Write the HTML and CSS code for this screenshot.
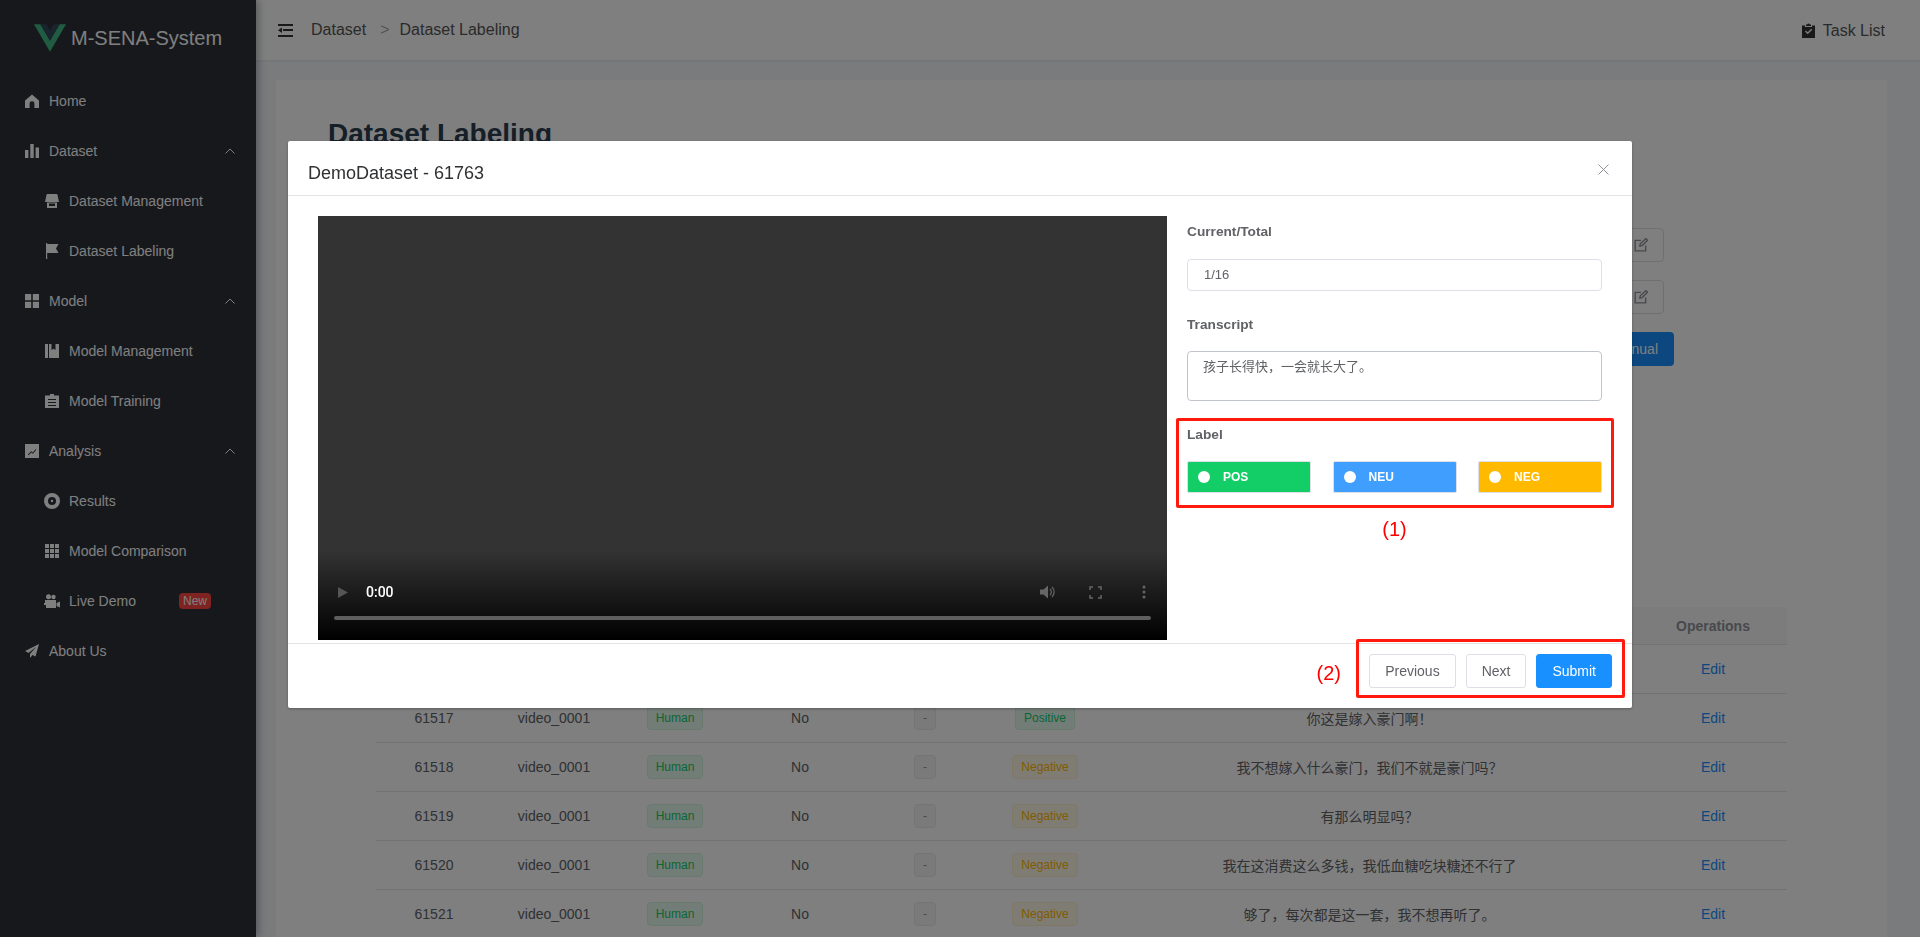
FILE: index.html
```html
<!DOCTYPE html>
<html>
<head>
<meta charset="utf-8">
<title>M-SENA-System</title>
<link rel="stylesheet" href="styles.css">
</head>
<body>
<div class="app">
    <aside class="sidebar">
        <div class="logo">
            <svg class="logo-mark" viewBox="0 0 256 221"><path fill="#41b883" d="M0 0l128 220.8L256 0h-51.2L128 132.48 50.56 0H0z"/><path fill="#35495e" d="M50.56 0L128 133.12 204.8 0h-47.36L128 51.2 97.92 0H50.56z"/></svg>
            <span>M-SENA-System</span>
        </div>
        <nav>
            <a class="item"><svg class="icon" viewBox="0 0 14 14"><path d="M7 0.5L0 6.6V14h4.600V9.600a2.400 2.400 0 0 1 4.800 0V14H14V6.600z"/></svg>Home</a>
            <a class="item"><svg class="icon" viewBox="0 0 14 14"><path d="M0 6h3.400v8H0zM5.300 0h3.400v14H5.300zM10.600 3.500H14V14h-3.400z"/></svg>Dataset<svg class="chevron" viewBox="0 0 10 6"><path d="M0.500 5.500L5 1l4.500 4.500"/></svg></a>
            <a class="item sub"><svg class="icon" viewBox="0 0 14 14"><path d="M2.500 0h9a1 1 0 0 1 1 .8L14 8H0L1.500 .8a1 1 0 0 1 1-.8zM2 8.500h10V14H2zm2 1V12h6V9.500z" fill-rule="evenodd"/></svg>Dataset Management</a>
            <a class="item sub"><svg class="icon flag" viewBox="0 0 14 16"><path d="M1 0h1.200v16H1zM2.200 1H13.500L11 5.500 13.500 10H2.200z"/></svg>Dataset Labeling</a>
            <a class="item"><svg class="icon" viewBox="0 0 14 14"><path d="M0 0h6.200v6.200H0zM7.800 0H14v6.200H7.800zM0 7.800h6.200V14H0zM7.800 7.800H14V14H7.800z"/></svg>Model<svg class="chevron" viewBox="0 0 10 6"><path d="M0.500 5.500L5 1l4.500 4.500"/></svg></a>
            <a class="item sub"><svg class="icon" viewBox="0 0 14 14"><path d="M0 0h3v14H0zM4 0h2.500v6L8.500 4.800 10.500 6V0H14v14H4z"/></svg>Model Management</a>
            <a class="item sub"><svg class="icon" viewBox="0 0 14 14"><path d="M5 0h4v1.500h5V14H0V1.500h5zM3 5v1h8V5zm0 3v1h8V8zm0 3v1h8v-1z" fill-rule="evenodd"/></svg>Model Training</a>
            <a class="item"><svg class="icon" viewBox="0 0 14 14"><path d="M0 0h14v14H0zM3 10.500l.7.7 2.600-2.700 1.600 1.300 3.400-4-.7-.6-2.800 3.300-1.600-1.300z" fill-rule="evenodd"/></svg>Analysis<svg class="chevron" viewBox="0 0 10 6"><path d="M0.500 5.500L5 1l4.500 4.500"/></svg></a>
            <a class="item sub"><svg class="icon wide" viewBox="0 0 16 16"><path d="M8 0a8 8 0 1 1 0 16A8 8 0 0 1 8 0zm0 4a4 4 0 1 0 0 8 4 4 0 0 0 0-8zm0 2.800a1.200 1.200 0 1 1 0 2.400 1.200 1.200 0 0 1 0-2.400z" fill-rule="evenodd"/></svg>Results</a>
            <a class="item sub"><svg class="icon" viewBox="0 0 14 14"><path d="M0 0h4v4H0zM5 0h4v4H5zM10 0h4v4h-4zM0 5h4v4H0zM5 5h4v4H5zM10 5h4v4h-4zM0 10h4v4H0zM5 10h4v4H5zM10 10h4v4h-4z"/></svg>Model Comparison</a>
            <a class="item sub"><svg class="icon wide" viewBox="0 0 16 14"><circle cx="4.500" cy="2.700" r="2.500"/><circle cx="9.500" cy="3" r="2.200"/><path d="M1 6h11v8H2v-3H0V9h1zM12.500 9L16 7.500v6L12.500 12z"/></svg>Live Demo<span class="badge">New</span></a>
            <a class="item"><svg class="icon" viewBox="0 0 14 14"><path d="M14 0L0 7l3.500 2L11 3 5 10v4l2.500-3 3 1.500z"/></svg>About Us</a>
        </nav>
    </aside>

    <div class="main">
        <header class="topbar">
            <svg class="fold" viewBox="0 0 15 13"><path d="M0 0h15v2H0zM5 5h10v2H5zM0 11h15v2H0zM4 3.500v5.500L0 6.200z"/></svg>
            <span class="crumb">Dataset</span>
            <span class="crumb-sep">&gt;</span>
            <span class="crumb">Dataset Labeling</span>
            <span class="tasks">
                <svg class="task-icon" viewBox="0 0 13 15"><path d="M4 1.500h1.200a1.400 1.400 0 0 1 2.600 0H9V3H4zM0 2.500h3V4h7V2.500h3V15H0zM3 8.500l2.700 2.700L10.200 6.700 9.200 5.700 5.700 9.200 4 7.500z" fill-rule="evenodd"/></svg>
                Task List
            </span>
        </header>

        <section class="content">
            <div class="card">
                <h1>Dataset Labeling</h1>
                <div class="tools">
                    <div class="tool-row"><span class="append"><svg viewBox="0 0 12 12"><path d="M10 6.500V11H1V2h5M5 7l.4-2L10.200.5l1.400 1.400L7 6.500z"/></svg></span></div>
                    <div class="tool-row"><span class="append"><svg viewBox="0 0 12 12"><path d="M10 6.500V11H1V2h5M5 7l.4-2L10.200.5l1.400 1.400L7 6.500z"/></svg></span></div>
                    <div class="tool-row last"><button class="manual">Manual</button></div>
                </div>
                <div class="table-wrap">
                    <table>
                        <colgroup>
                            <col class="c1"><col class="c2"><col class="c3"><col class="c4"><col class="c5"><col class="c6"><col class="c7"><col class="c8">
                        </colgroup>
                        <thead>
                            <tr><th></th><th></th><th></th><th></th><th></th><th></th><th></th><th class="ops">Operations</th></tr>
                        </thead>
                        <tbody>
                            <tr><td></td><td></td><td></td><td></td><td></td><td></td><td></td><td class="ops"><a>Edit</a></td></tr>
                            <tr><td>61517</td><td>video_0001</td><td><span class="tag good">Human</span></td><td>No</td><td><span class="tag info">-</span></td><td><span class="tag good">Positive</span></td><td>你这是嫁入豪门啊！</td><td class="ops"><a>Edit</a></td></tr>
                            <tr><td>61518</td><td>video_0001</td><td><span class="tag good">Human</span></td><td>No</td><td><span class="tag info">-</span></td><td><span class="tag warn">Negative</span></td><td>我不想嫁入什么豪门，我们不就是豪门吗？</td><td class="ops"><a>Edit</a></td></tr>
                            <tr><td>61519</td><td>video_0001</td><td><span class="tag good">Human</span></td><td>No</td><td><span class="tag info">-</span></td><td><span class="tag warn">Negative</span></td><td>有那么明显吗？</td><td class="ops"><a>Edit</a></td></tr>
                            <tr><td>61520</td><td>video_0001</td><td><span class="tag good">Human</span></td><td>No</td><td><span class="tag info">-</span></td><td><span class="tag warn">Negative</span></td><td>我在这消费这么多钱，我低血糖吃块糖还不行了</td><td class="ops"><a>Edit</a></td></tr>
                            <tr><td>61521</td><td>video_0001</td><td><span class="tag good">Human</span></td><td>No</td><td><span class="tag info">-</span></td><td><span class="tag warn">Negative</span></td><td>够了，每次都是这一套，我不想再听了。</td><td class="ops"><a>Edit</a></td></tr>
                        </tbody>
                    </table>
                </div>
            </div>
        </section>
    </div>
</div>

<div class="overlay"></div>

<div class="dialog">
    <div class="dialog-head">
        <span>DemoDataset - 61763</span>
        <svg class="close" viewBox="0 0 11 11"><path d="M0.500 0.500l10 10M10.500 0.500l-10 10"/></svg>
    </div>
    <div class="dialog-body">
        <div class="video">
            <div class="controls">
                <div class="control-row">
                    <svg class="play" viewBox="0 0 10 11"><path d="M0 0l10 5.500L0 11z"/></svg>
                    <span class="time">0:00</span>
                    <svg class="volume" viewBox="0 0 16 14"><path d="M0 4.500h3.500L8 0.500v13l-4.500-4H0z"/><path class="wave" d="M10 4a4 4 0 0 1 0 6M12 2a7 7 0 0 1 0 10"/></svg>
                    <svg class="full" viewBox="0 0 13 13"><path d="M1 4V1h3M9 1h3v3M12 9v3H9M4 12H1V9"/></svg>
                    <svg class="more" viewBox="0 0 4 14"><circle cx="2" cy="2" r="1.500"/><circle cx="2" cy="7" r="1.500"/><circle cx="2" cy="12" r="1.500"/></svg>
                </div>
                <div class="timeline"></div>
            </div>
        </div>
        <div class="form">
            <div class="field-label">Current/Total</div>
            <div class="input">1/16</div>
            <div class="field-label second">Transcript</div>
            <div class="textarea">孩子长得快，一会就长大了。</div>
            <div class="mark-box label-box">
                <div class="label-title">Label</div>
                <div class="choices">
                    <span class="choice pos"><i></i>POS</span>
                    <span class="choice neu"><i></i>NEU</span>
                    <span class="choice neg"><i></i>NEG</span>
                </div>
            </div>
            <div class="mark-note">(1)</div>
        </div>
    </div>
    <div class="dialog-foot">
        <span class="mark-note foot-note">(2)</span>
        <div class="mark-box foot-box">
            <button class="btn">Previous</button>
            <button class="btn">Next</button>
            <button class="btn primary">Submit</button>
        </div>
    </div>
</div>
</body>
</html>
```

FILE: styles.css
```css
* {
    box-sizing: border-box;
}

html, body {
    margin: 0;
    height: 100%;
    overflow: hidden;
}

body {
    font-family: "Liberation Sans", "Noto Sans CJK SC", sans-serif;
    font-size: 14px;
    color: #606266;
}

.app {
    display: flex;
    height: 937px;
}

/* sidebar */
.sidebar {
    width: 256px;
    flex-shrink: 0;
    background: #2e3039;
    color: #fff;
    box-shadow: 2px 0 8px rgba(0, 21, 41, .35);
    position: relative;
    z-index: 1;
}

.logo {
    height: 76px;
    display: flex;
    align-items: center;
    padding-left: 34px;
    font-size: 20px;
    gap: 5px;
}

.logo-mark {
    width: 32px;
    height: 28px;
}

.item {
    height: 50px;
    display: flex;
    align-items: center;
    padding-left: 25px;
    fill: currentColor;
}

.item.sub {
    padding-left: 45px;
}

.icon {
    width: 14px;
    height: 14px;
    margin-right: 10px;
    flex-shrink: 0;
}

.icon.wide {
    width: 16px;
    height: 16px;
    margin-left: -1px;
    margin-right: 9px;
}

.icon.flag {
    height: 16px;
}

.chevron {
    width: 10px;
    height: 6px;
    margin-left: auto;
    margin-right: 21px;
    fill: none;
    stroke: currentColor;
    stroke-width: 1;
}

.badge {
    margin-left: auto;
    margin-right: 45px;
    height: 16px;
    width: 32px;
    line-height: 16px;
    text-align: center;
    font-size: 12px;
    border-radius: 4px;
    background: #ff4545;
}

/* main part */
.main {
    flex: 1;
    min-width: 0;
    display: flex;
    flex-direction: column;
    background: #f4f6fa;
}

.topbar {
    height: 60px;
    flex-shrink: 0;
    display: flex;
    align-items: center;
    padding: 0 35px 0 22px;
    background: #fff;
    font-size: 16px;
    color: #555;
    box-shadow: 0 1px 2px rgba(0, 21, 41, .08);
}

.fold {
    width: 15px;
    height: 13px;
    margin-right: 18px;
    fill: #333;
}

.crumb-sep {
    margin: 0 10px 0 14px;
    color: #aaa;
}

.tasks {
    margin-left: auto;
    padding-top: 2px;
    display: flex;
    align-items: center;
    gap: 8px;
}

.task-icon {
    width: 13px;
    height: 15px;
    margin-top: -2px;
    fill: #333;
}

.content {
    flex: 1;
    padding: 20px 33px 0 20px;
    min-height: 0;
}

.card {
    background: #fff;
    height: 100%;
    padding-top: 38px;
}

h1 {
    margin: 0 0 0 52px;
    font-size: 28px;
    line-height: 32px;
    color: #2c3e50;
}

.tools {
    margin-top: 78px;
    padding-right: 213px;
    display: flex;
    flex-direction: column;
    gap: 18px;
}

.tool-row {
    display: flex;
    justify-content: flex-end;
    padding-right: 10px;
    height: 34px;
}

.tool-row.last {
    padding-right: 0;
}

.append {
    width: 80px;
    display: flex;
    align-items: center;
    justify-content: flex-end;
    padding-right: 15px;
    border: 1px solid #dcdfe6;
    border-radius: 4px;
}

.append svg {
    width: 14px;
    height: 14px;
    fill: none;
    stroke: #909399;
    stroke-width: 1.2;
}

.manual {
    width: 120px;
    border: 0;
    border-radius: 4px;
    background: #1890ff;
    color: #fff;
    font: inherit;
    text-align: right;
    padding-right: 16px;
}

.table-wrap {
    margin-top: 241px;
    padding: 0 100px;
}

table {
    width: 100%;
    table-layout: fixed;
    border-collapse: separate;
    border-spacing: 0;
}

.c1 { width: 116px; }
.c2 { width: 124px; }
.c3 { width: 118px; }
.c4 { width: 132px; }
.c5 { width: 118px; }
.c6 { width: 122px; }
.c8 { width: 154px; }

th, td {
    text-align: center;
    border-bottom: 1px solid #dfe6ec;
    padding: 0;
}

th {
    height: 38px;
    background: #f8f8f9;
    color: #909399;
}

td {
    height: 49px;
}

.ops {
    padding-left: 6px;
}

td a {
    color: #1890ff;
}

.tag {
    display: inline-block;
    height: 24px;
    line-height: 22px;
    padding: 0 8px;
    border: 1px solid;
    border-radius: 4px;
    font-size: 12px;
    vertical-align: middle;
}

.tag.good {
    color: #13ce66;
    background: #e7faf0;
    border-color: #d0f5e0;
}

.tag.warn {
    color: #ffba00;
    background: #fff8e6;
    border-color: #fff1cc;
}

.tag.info {
    color: #909399;
    background: #f4f4f5;
    border-color: #e9e9eb;
}

/* dialog */
.overlay {
    position: fixed;
    inset: 0;
    z-index: 5;
    background: rgba(0, 0, 0, .5);
}

.dialog {
    position: fixed;
    z-index: 6;
    left: 288px;
    top: 141px;
    width: 1344px;
    height: 567px;
    background: #fff;
    border-radius: 2px;
    box-shadow: 0 1px 3px rgba(0, 0, 0, .3);
}

.dialog-head {
    height: 55px;
    padding: 20px 20px 0;
    font-size: 18px;
    line-height: 24px;
    color: #303133;
    border-bottom: 1px solid #e4e4e4;
}

.close {
    position: absolute;
    top: 23px;
    right: 23px;
    width: 11px;
    height: 11px;
    fill: none;
    stroke: #909399;
    stroke-width: 1;
}

.dialog-body {
    display: flex;
    gap: 20px;
    padding: 20px 30px 0;
    height: 447px;
}

.video {
    width: 849px;
    height: 424px;
    flex-shrink: 0;
    background: #333;
    display: flex;
    flex-direction: column;
    justify-content: flex-end;
}

.controls {
    height: 90px;
    padding: 0 16px 20px;
    display: flex;
    flex-direction: column;
    justify-content: flex-end;
    background: linear-gradient(rgba(0, 0, 0, 0), #000);
}

.control-row {
    display: flex;
    align-items: center;
    height: 16px;
    margin-bottom: 16px;
    padding: 0 5px 0 4px;
}

.play {
    width: 10px;
    height: 11px;
    fill: #555;
}

.time {
    margin-left: 18px;
    color: #fff;
    font-family: Roboto, sans-serif;
    font-size: 14px;
    font-weight: 500;
}

.volume {
    width: 16px;
    height: 14px;
    margin-left: auto;
    fill: #666;
}

.volume .wave {
    fill: none;
    stroke: #666;
    stroke-width: 1.200;
}

.full {
    width: 13px;
    height: 13px;
    margin-left: 33px;
    fill: none;
    stroke: #666;
    stroke-width: 1.500;
}

.more {
    width: 4px;
    height: 14px;
    margin-left: 40px;
    fill: #666;
}

.timeline {
    height: 4px;
    border-radius: 2px;
    background: #5e5e5e;
}

.form {
    width: 415px;
    flex-shrink: 0;
}

.field-label {
    height: 32px;
    line-height: 32px;
    font-size: 13.7px;
    font-weight: bold;
    color: #606266;
}

.field-label.second {
    margin-top: 18px;
}

.input {
    margin-top: 11px;
    height: 32px;
    line-height: 30px;
    padding-left: 16px;
    font-size: 13px;
    border: 1px solid #dcdfe6;
    border-radius: 4px;
}

.textarea {
    margin-top: 10px;
    height: 50px;
    padding: 5px 15px;
    font-size: 13px;
    line-height: 20px;
    border: 1px solid #c0c4cc;
    border-radius: 4px;
}

.mark-box {
    border: 3px solid #ff1a0d;
    border-radius: 2px;
}

.label-box {
    margin: 17px -12px 0 -11px;
    padding: 3px 9px 12px 8px;
}

.label-title {
    height: 22px;
    line-height: 22px;
    font-size: 13.7px;
    font-weight: bold;
}

.choices {
    margin-top: 15px;
    display: flex;
    justify-content: space-between;
}

.choice {
    width: 124px;
    height: 32px;
    display: flex;
    align-items: center;
    padding-left: 10px;
    gap: 13px;
    border: 1px solid #dcdfe6;
    border-radius: 2px;
    color: #fff;
    font-size: 12px;
    font-weight: bold;
}

.choice i {
    width: 12px;
    height: 12px;
    border-radius: 50%;
    background: #fff;
}

.pos { background: #13ce66; }
.neu { background: #409eff; }
.neg { background: #ffba00; }

.mark-note {
    margin-top: 6px;
    height: 30px;
    line-height: 30px;
    font-size: 20px;
    text-align: center;
    color: #f00;
}

.dialog-foot {
    height: 65px;
    border-top: 1px solid #e4e4e4;
    display: flex;
    justify-content: flex-end;
    align-items: flex-start;
    padding-right: 7px;
}

.foot-note {
    margin: 14px 15px 0 0;
}

.foot-box {
    margin-top: -5px;
    width: 269px;
    height: 59px;
    display: flex;
    align-items: center;
    justify-content: flex-end;
    gap: 10px;
    padding: 5px 10px 0 0;
}

.btn {
    height: 34px;
    padding: 0 15px;
    font: inherit;
    color: #606266;
    background: #fff;
    border: 1px solid #dcdfe6;
    border-radius: 3px;
}

.btn.primary {
    color: #fff;
    background: #1890ff;
    border-color: #1890ff;
    font-weight: normal;
}
```
